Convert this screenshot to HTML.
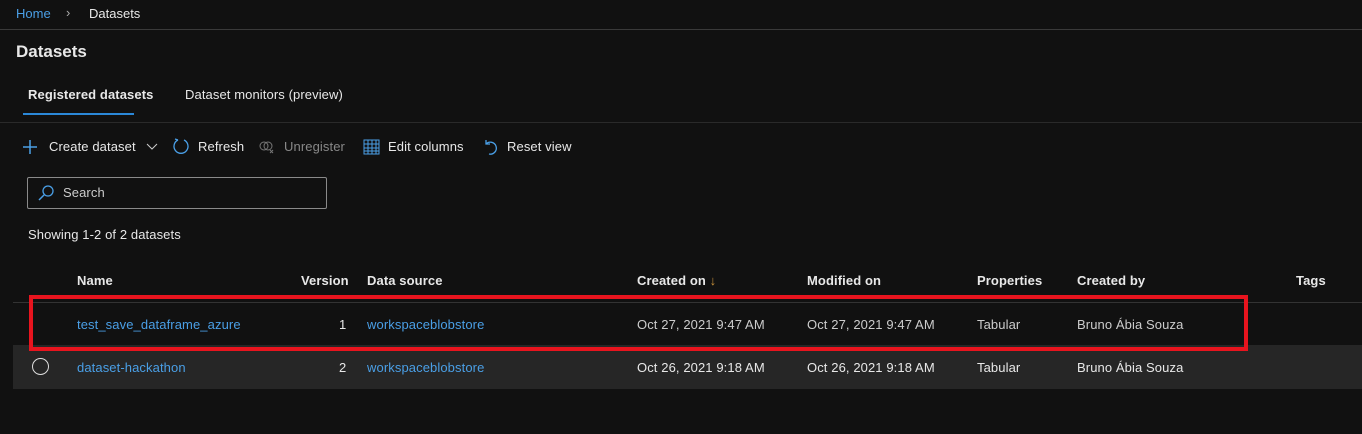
<!DOCTYPE html>
<html><head><meta charset="utf-8"><style>
*{margin:0;padding:0;box-sizing:border-box}
body{width:1362px;height:434px;background:#111;color:#e8e8e8;font-family:"Liberation Sans",sans-serif;font-size:13px;position:relative;overflow:hidden}
.a{position:absolute;white-space:nowrap}
.b{font-weight:bold}
.l{color:#4a9fe6}
.c{letter-spacing:0.1px}
</style></head><body>
<div class="a l" style="left:16px;top:6px">Home</div>
<div class="a" style="left:66px;top:5px;color:#aaa">&#8250;</div>
<div class="a" style="left:89px;top:6px">Datasets</div>
<div class="a" style="left:0;top:29px;width:1362px;height:1px;background:#3a3a3a"></div>
<div class="a b" style="left:16px;top:42px;font-size:17px">Datasets</div>
<div class="a b c" style="left:28px;top:87px">Registered datasets</div>
<div class="a c" style="left:185px;top:87px">Dataset monitors (preview)</div>
<div class="a" style="left:23px;top:113px;width:111px;height:2px;background:#2b88d8"></div>
<div class="a" style="left:0;top:122px;width:1362px;height:1px;background:#2a2a2a"></div>
<svg class="a" style="left:22px;top:139px" width="16" height="16"><path d="M8 1V15M1 8H15" stroke="#4a9fe6" stroke-width="1.5"/></svg>
<div class="a c" style="left:49px;top:139px">Create dataset</div>
<svg class="a" style="left:146px;top:143px" width="12" height="8"><path d="M1 1L6 6L11 1" stroke="#ccc" fill="none"/></svg>
<svg class="a" style="left:172px;top:137px" width="18" height="18"><path d="M6 3A7 7 0 1 0 12 3M6 3L3 2" stroke="#4a9fe6" fill="none" stroke-width="1.3"/></svg>
<div class="a c" style="left:198px;top:139px">Refresh</div>
<svg class="a" style="left:259px;top:140px" width="16" height="14"><circle cx="5" cy="6" r="4" stroke="#777" fill="none"/><circle cx="9" cy="6" r="4" stroke="#777" fill="none"/><path d="M11 10l3 3M14 10l-3 3" stroke="#777"/></svg>
<div class="a c" style="left:284px;top:139px;color:#888">Unregister</div>
<svg class="a" style="left:363px;top:138px" width="17" height="17"><rect x="1" y="2" width="15" height="14" stroke="#4a9fe6" fill="none"/><path d="M1 6H16M1 10H16M1 13H16M5 2V16M9 2V16M13 2V16" stroke="#4a9fe6"/></svg>
<div class="a c" style="left:388px;top:139px">Edit columns</div>
<svg class="a" style="left:483px;top:138px" width="16" height="18"><path d="M3 2V6H7M3 6A6 6 0 1 1 6 16" stroke="#4a9fe6" fill="none" stroke-width="1.3"/></svg>
<div class="a c" style="left:507px;top:139px">Reset view</div>
<div class="a" style="left:27px;top:177px;width:300px;height:32px;border:1px solid #8a8a8a;border-radius:2px"></div>
<svg class="a" style="left:37px;top:184px" width="18" height="18"><circle cx="11" cy="7" r="5" stroke="#4a9fe6" fill="none" stroke-width="1.3"/><path d="M7 11L2 16" stroke="#4a9fe6" stroke-width="1.5"/></svg>
<div class="a c" style="left:63px;top:185px;color:#ccc">Search</div>
<div class="a c" style="left:28px;top:227px">Showing 1-2 of 2 datasets</div>
<div class="a b c" style="left:77px;top:273px">Name</div>
<div class="a b c" style="left:301px;top:273px">Version</div>
<div class="a b c" style="left:367px;top:273px">Data source</div>
<div class="a b c" style="left:637px;top:273px">Created on <span style="color:#c8913a;font-weight:normal">&#8595;</span></div>
<div class="a b c" style="left:807px;top:273px">Modified on</div>
<div class="a b c" style="left:977px;top:273px">Properties</div>
<div class="a b c" style="left:1077px;top:273px">Created by</div>
<div class="a b c" style="left:1296px;top:273px">Tags</div>
<div class="a" style="left:13px;top:302px;width:1349px;height:1px;background:#333"></div>
<div class="a" style="left:13px;top:345px;width:1349px;height:44px;background:#262626"></div>
<div class="a l c" style="left:77px;top:317px">test_save_dataframe_azure</div>
<div class="a c" style="left:339px;top:317px">1</div>
<div class="a l c" style="left:367px;top:317px">workspaceblobstore</div>
<div class="a c" style="left:637px;top:317px;color:#ccc">Oct 27, 2021 9:47 AM</div>
<div class="a c" style="left:807px;top:317px;color:#ccc">Oct 27, 2021 9:47 AM</div>
<div class="a c" style="left:977px;top:317px;color:#ccc">Tabular</div>
<div class="a c" style="left:1077px;top:317px;color:#ccc">Bruno Ábia Souza</div>
<div class="a" style="left:32px;top:358px;width:17px;height:17px;border:1.5px solid #ddd;border-radius:50%"></div>
<div class="a l c" style="left:77px;top:360px">dataset-hackathon</div>
<div class="a c" style="left:339px;top:360px">2</div>
<div class="a l c" style="left:367px;top:360px">workspaceblobstore</div>
<div class="a c" style="left:637px;top:360px">Oct 26, 2021 9:18 AM</div>
<div class="a c" style="left:807px;top:360px">Oct 26, 2021 9:18 AM</div>
<div class="a c" style="left:977px;top:360px">Tabular</div>
<div class="a c" style="left:1077px;top:360px">Bruno Ábia Souza</div>
<div class="a" style="left:29px;top:295px;width:1219px;height:56px;border:4px solid #e8141e"></div>
</body></html>
